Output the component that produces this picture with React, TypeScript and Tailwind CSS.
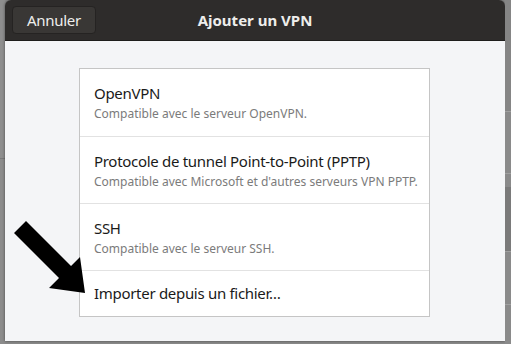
import React from "react";

const rows = [
  { title: "OpenVPN", sub: "Compatible avec le serveur OpenVPN." },
  { title: "Protocole de tunnel Point-to-Point (PPTP)", sub: "Compatible avec Microsoft et d'autres serveurs VPN PPTP." },
  { title: "SSH", sub: "Compatible avec le serveur SSH." },
];

export default function App() {
  return (
    <div
      className="relative flex w-[511px] h-[344px] bg-[#8a8a8a] overflow-hidden"
      style={{ fontFamily: '"Noto Sans", "Open Sans", sans-serif' }}
    >
      <div className="w-[5px] h-full bg-[#8c8c8c] flex flex-col">
        <div className="h-[158px] bg-[#8e8e8e]" />
        <div className="h-px bg-[#7a7a7a]" />
      </div>
      <div className="w-[500px] h-[341px] flex flex-col rounded-t-[6px] overflow-hidden shadow-[0_0_3px_rgba(0,0,0,0.5)]">
        <div className="h-[41px] shrink-0 bg-[#2e2c2b] border-b border-[#1e1d1c] flex items-center relative">
          <div className="ml-[7px] w-[84px] h-[28px] rounded-[4px] bg-[#393735] border border-[#252322] flex items-center justify-center text-[15px] tracking-[-0.3px] text-[#eeeeec]">
            Annuler
          </div>
          <div className="absolute left-0 right-0 text-center text-[15px] font-bold text-[#eeeeec] pointer-events-none">
            Ajouter un VPN
          </div>
        </div>
        <div className="flex-1 bg-[#f4f5f7] pt-[27px] pl-[74px]">
          <div className="w-[351px] bg-white border border-[#c5c5c5] flex flex-col">
            {rows.map((r, i) => (
              <div key={i} className={`h-[67px] pl-[14px] flex flex-col justify-center ${i > 0 ? "border-t border-[#e2e2e2]" : ""}`}>
                <div className="text-[15px] leading-[20px] tracking-[-0.3px] text-[#1a1a1a]">{r.title}</div>
                <div className="text-[12px] leading-[16px] text-[#7b7b7b] mt-[3px]">{r.sub}</div>
              </div>
            ))}
            <div className="h-[46px] pl-[14px] border-t border-[#e2e2e2] flex items-center text-[15px] tracking-[-0.3px] text-[#1a1a1a]">
              Importer depuis un fichier…
            </div>
          </div>
        </div>
      </div>
      <div className="w-[6px] h-full flex flex-col bg-[#8a8a8a]">
        <div className="h-[111px] bg-[#858585]" />
        <div className="h-px bg-[#a0a0a0]" />
        <div className="h-[61px]" />
        <div className="h-px bg-[#a0a0a0]" />
        <div className="h-[13px]" />
        <div className="h-[64px] bg-[#7a7a7a]" />
        <div className="h-px bg-[#a0a0a0]" />
        <div className="h-[52px]" />
        <div className="h-px bg-[#a0a0a0]" />
      </div>
      <svg className="absolute left-0 top-0 pointer-events-none" width="511" height="344">
        <polygon points="14,233 26,221 71,266 80,257 85,293 49,288 59,278" fill="#000" />
      </svg>
    </div>
  );
}
